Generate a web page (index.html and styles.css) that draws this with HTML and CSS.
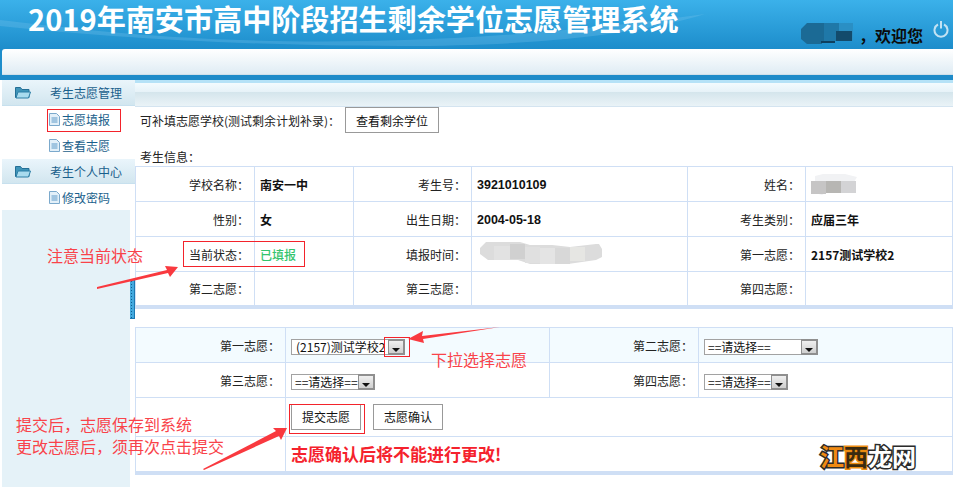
FILE: index.html
```html
<!DOCTYPE html>
<html lang="zh-CN">
<head>
<meta charset="utf-8">
<title>2019年南安市高中阶段招生剩余学位志愿管理系统</title>
<link rel="stylesheet" href="styles.css">
</head>
<body>
<header class="top">
  <svg class="swoosh" viewBox="0 0 953 49" preserveAspectRatio="none" aria-hidden="true"><path d="M0 20C90 30 330 66 705 14C640 34 540 46 400 46C240 46 90 36 0 26Z" fill="#7cc5ec" opacity=".28"/></svg>
  <h1 class="title">2019年南安市高中阶段招生剩余学位志愿管理系统</h1>
  <div class="user">
    <svg class="blur-name" width="54" height="24" viewBox="0 0 54 24" aria-hidden="true"><path d="M8 2h45v18h-30v3H8l-6-5V8z" fill="#1b6a95"/><rect x="25" y="2" width="15" height="18" fill="#1f78a8"/><rect x="40" y="2" width="14" height="18" fill="#2a8fc4"/><rect x="37" y="10" width="16" height="10" fill="#134b6c"/><rect x="22" y="20" width="14" height="2" fill="#0e3f5e"/></svg>
    <span class="welcome">，欢迎您</span>
    <svg class="power" width="16" height="18" viewBox="0 0 16 18" aria-hidden="true"><path d="M5 4.500a6.500 6.500 0 1 0 6 0" fill="none" stroke="#c2e2f3" stroke-width="2"/><path d="M8 1v7.500" stroke="#c2e2f3" stroke-width="2"/></svg>
  </div>
</header>
<nav class="navbar"><div class="navbar-inner"></div></nav>
<div class="bluebar"></div>
<div class="main">
  <aside class="side">
    <div class="group">
      <svg class="folder" width="16" height="13" viewBox="0 0 16 13" aria-hidden="true"><path d="M.5 11.500V1.500h5l1.500 2h7v8z" fill="#3f94b8" stroke="#256f96"/><path d="M1 12l2-6h12.500l-2 6z" fill="#a9dbee" stroke="#2d7fa6"/></svg>
      <span>考生志愿管理</span>
    </div>
    <ul class="links">
      <li><svg class="doc" width="11" height="13" viewBox="0 0 11 13" aria-hidden="true"><path d="M.5.500h7l3 3v9H.5z" fill="#e3f0f9" stroke="#7ba9cc"/><path d="M2.500 5h6M2.500 7h6M2.500 9h6" stroke="#5f9ac8"/></svg>志愿填报</li>
      <li><svg class="doc" width="11" height="13" viewBox="0 0 11 13" aria-hidden="true"><path d="M.5.500h7l3 3v9H.5z" fill="#e3f0f9" stroke="#7ba9cc"/><path d="M2.500 5h6M2.500 7h6M2.500 9h6" stroke="#5f9ac8"/></svg>查看志愿</li>
    </ul>
    <div class="group group-2">
      <svg class="folder" width="16" height="13" viewBox="0 0 16 13" aria-hidden="true"><path d="M.5 11.500V1.500h5l1.500 2h7v8z" fill="#3f94b8" stroke="#256f96"/><path d="M1 12l2-6h12.500l-2 6z" fill="#a9dbee" stroke="#2d7fa6"/></svg>
      <span>考生个人中心</span>
    </div>
    <ul class="links links-2">
      <li><svg class="doc" width="11" height="13" viewBox="0 0 11 13" aria-hidden="true"><path d="M.5.500h7l3 3v9H.5z" fill="#e3f0f9" stroke="#7ba9cc"/><path d="M2.500 5h6M2.500 7h6M2.500 9h6" stroke="#5f9ac8"/></svg>修改密码</li>
    </ul>
    <div class="side-fill"><div class="handle"></div></div>
  </aside>
  <main class="content">
    <div class="content-head"></div>
    <div class="avail">
      <span>可补填志愿学校(测试剩余计划补录)：</span>
      <button class="btn btn-view" type="button">查看剩余学位</button>
    </div>
    <div class="info-title">考生信息：</div>
    <table class="info">
      <colgroup><col class="c1"><col class="c2"><col class="c3"><col class="c4"><col class="c5"><col></colgroup>
      <tr><th>学校名称：</th><td>南安一中</td><th>考生号：</th><td class="mono">3921010109</td><th>姓名：</th><td class="blur-cell"><svg class="blur-short" width="46" height="24" viewBox="0 0 46 24" aria-hidden="true"><path d="M4 10V4l8-2h22l12 3-3 5v11H14l-3 2-7-2z" fill="#f1f2f4"/><rect x="0" y="9" width="15" height="13" fill="#c6c5c5"/><rect x="15" y="9" width="15" height="12" fill="#b7b6b3"/><rect x="30" y="9" width="15" height="12" fill="#d3d3d5"/></svg></td></tr>
      <tr><th>性别：</th><td>女</td><th>出生日期：</th><td class="mono">2004-05-18</td><th>考生类别：</th><td>应届三年</td></tr>
      <tr><th>当前状态：</th><td class="ok">已填报</td><th>填报时间：</th><td class="blur-cell"><svg class="blur-long" width="122" height="28" viewBox="0 0 122 28" aria-hidden="true"><path d="M6 2h34l10 3h22l18 2 26-3h3l3 5v8l-6 3-28 4H50l-12-4H8l-8-6V8z" fill="#dcdcdc"/><rect x="14" y="6" width="16" height="14" fill="#e2e2e2"/><rect x="30" y="4" width="15" height="15" fill="#d0d0d0"/><rect x="45" y="7" width="15" height="16" fill="#e0e0e0"/><rect x="60" y="8" width="15" height="16" fill="#e4e4e4"/><rect x="75" y="8" width="15" height="16" fill="#d8d8d8"/><rect x="90" y="7" width="15" height="14" fill="#e6e6e3"/></svg></td><th>第一志愿：</th><td>2157测试学校2</td></tr>
      <tr><th>第二志愿：</th><td></td><th>第三志愿：</th><td></td><th>第四志愿：</th><td></td></tr>
    </table>
    <table class="choice">
      <colgroup><col class="d1"><col class="d2"><col class="d3"><col></colgroup>
      <tr class="tint">
        <th>第一志愿：</th>
        <td><div class="sel sel-thin"><span class="sel-text">(2157)测试学校2</span><span class="arrow"></span></div></td>
        <th>第二志愿：</th>
        <td><div class="sel sel-wide"><span class="sel-text">==请选择==</span><span class="arrow"></span></div></td>
      </tr>
      <tr>
        <th>第三志愿：</th>
        <td><div class="sel"><span class="sel-text">==请选择==</span><span class="arrow"></span></div></td>
        <th>第四志愿：</th>
        <td><div class="sel"><span class="sel-text">==请选择==</span><span class="arrow"></span></div></td>
      </tr>
      <tr class="actions">
        <th></th>
        <td colspan="3"><button class="btn btn-submit" type="button">提交志愿</button><button class="btn btn-confirm" type="button">志愿确认</button></td>
      </tr>
      <tr class="warning">
        <th></th>
        <td colspan="3">志愿确认后将不能进行更改!</td>
      </tr>
    </table>
  </main>
</div>

<div class="mark mark-link"></div>
<div class="mark mark-state"></div>
<div class="mark mark-arrow"></div>
<div class="mark mark-submit"></div>
<svg class="arrows" width="953" height="487" viewBox="0 0 953 487" aria-hidden="true">
  <path d="M97 287L167 270L165 266L178 267L170 277L168 273L97 289Z" fill="#f9393f"/>
  <path d="M500 327L422 336L423 331L408 339L424 343L423 339Z" fill="#f9393f"/>
  <path d="M203 469L276 431L273 428L287 428L281 440L279 436L204 470Z" fill="#f9393f"/>
</svg>
<div class="note note-state">注意当前状态</div>
<div class="note note-drop">下拉选择志愿</div>
<div class="note note-submit">提交后，志愿保存到系统<br>更改志愿后，须再次点击提交</div>
<div class="watermark"><span class="wm-o">江</span><span class="wm-box">西</span><span class="wm-w">龙网</span></div>
</body>
</html>
```
FILE: styles.css
```css
* { box-sizing: border-box; }
html, body { margin: 0; padding: 0; }
body {
  position: relative;
  width: 953px;
  height: 487px;
  overflow: hidden;
  background: #fff;
  font-family: "Noto Sans CJK SC", "Liberation Sans", sans-serif;
  font-size: 12px;
  color: #222;
}
.top {
  position: relative;
  height: 49px;
  display: flex;
  justify-content: space-between;
  background: linear-gradient(#3bb1ea, #1d8dcb);
}
.swoosh { position: absolute; inset: 0; width: 100%; height: 100%; }
.title {
  position: relative;
  margin: 0;
  padding-left: 28px;
  font-size: 29.100px;
  line-height: 36px;
  font-weight: 700;
  color: #fff;
  white-space: nowrap;
}
.user { position: relative; display: flex; align-items: flex-start; padding-right: 4px; }
.blur-name { margin-top: 21px; margin-right: 6px; }
.welcome { margin-top: 24px; margin-right: 10px; font-size: 16px; line-height: 22px; font-weight: 700; color: #0c0c0c; white-space: nowrap; }
.power { margin-top: 20px; }
.navbar { height: 26px; padding-left: 2px; background: #1d8dcb; }
.navbar-inner {
  height: 100%;
  background: linear-gradient(#fff, #dfecf4);
  border-bottom: 1px solid #cfe0ea;
  border-top-left-radius: 3px;
}
.bluebar { height: 5px; background: #1e8bc9; }
.main { display: flex; height: 407px; }
.side { width: 135px; flex: none; padding-left: 2px; background: #fff; display: flex; flex-direction: column; }
.group {
  height: 26px;
  flex: none;
  display: flex;
  align-items: center;
  padding-left: 13px;
  background: linear-gradient(#eaf5fb, #d2e6ef);
  border-bottom: 1px solid #c7e0ee;
  color: #1a5f8c;
}
.group span { margin-left: 19px; }
.group-2 { height: 25px; }
.folder { flex: none; }
.links { margin: 0; padding: 0; list-style: none; height: 53px; flex: none; }
.links-2 { height: 26px; }
.links li {
  height: 26px;
  padding-left: 47px;
  display: flex;
  align-items: center;
  color: #1a5f8c;
}
.doc { margin-right: 2px; flex: none; }
.side-fill { position: relative; flex: 1; width: 128px; background: #e5f2f8; }
.handle {
  position: absolute;
  left: 128px;
  top: 70px;
  width: 5px;
  height: 39px;
  background-color: #43a9de;
  background-image: radial-gradient(#0e5f93 0.600px, transparent 0.800px);
  background-size: 3px 3px;
  border-right: 1px solid #1b78b2;
  border-bottom: 1px solid #1b78b2;
}
.content { flex: 1; min-width: 0; font-family: "Noto Sans CJK TC", "Noto Sans CJK SC", sans-serif; }
.content-head {
  height: 27px;
  background: linear-gradient(#b5e2f7 0 3px, #f3fbfe 3px, #e6f2f8 12px, #d4e5ec 12px, #eaf3f7 26px, #d4e4f0 26px);
}
.avail { height: 26px; padding-left: 5px; display: flex; align-items: center; white-space: nowrap; }
.avail span { width: 205px; }
.btn {
  font: inherit;
  color: #111;
  background: #fff;
  border: 1px solid #999;
  border-radius: 0;
  padding: 0;
  cursor: pointer;
}
.btn-view { width: 94px; height: 26px; }
.info-title { height: 33px; padding: 15px 0 0 5px; line-height: 18px; }
table { border-collapse: collapse; table-layout: fixed; width: 818px; }
th, td { border: 1px solid #cfdff5; padding: 2px 0 0; line-height: 18px; }
th { font-weight: 400; text-align: right; padding-right: 5px; color: #222; }
.info tr { height: 35px; }
.info td { padding-left: 5px; font-weight: 700; color: #111; font-family: "Noto Sans CJK SC", sans-serif; }
.info { border-bottom: 4px solid #cfdff5; }
.c1 { width: 119px; } .c2 { width: 99px; } .c3 { width: 118px; } .c4 { width: 216px; } .c5 { width: 118px; }
.info .mono { font-family: "Liberation Sans", sans-serif; font-size: 12.500px; }
.info .ok { color: #35c46e; font-weight: 500; }
.info .blur-cell { padding-top: 0; overflow: visible; }
.blur-short { display: block; }
.blur-long { display: block; margin-left: 3px; }
.choice { margin-top: 18px; border-bottom: 4px solid #cfdff5; }
.choice tr { height: 35px; }
.d1 { width: 150px; } .d2 { width: 264px; } .d3 { width: 149px; }
.choice td { padding-left: 5px; }
.tint th, .tint td { background: #f3fbff; }
.choice .actions { height: 39px; }
.choice .actions td { padding-top: 0; }
.choice .warning { height: 37px; }
.warning td { padding-top: 0; font-size: 17px; font-weight: 700; color: #f5222d; font-family: "Noto Sans CJK SC", sans-serif; }
.sel {
  display: inline-flex;
  width: 84px;
  height: 16px;
  align-items: stretch;
  vertical-align: middle;
  border: 1px solid #a2a2a2;
  background: #fff;
  color: #111;
  font-family: "Noto Sans CJK SC", sans-serif;
}
.sel-text { flex: 1; min-width: 0; line-height: 14px; padding-left: 3px; white-space: nowrap; }
.sel-thin { width: 114px; }
.sel-thin .sel-text { padding-left: 4px; }
.sel-wide { width: 114px; }
.arrow {
  position: relative;
  flex: none;
  width: 17px;
  margin: -1px -1px -1px 0;
  background: linear-gradient(#efefef, #cfcfcf);
  border: 2px solid #8f8f8f;
  border-left-width: 1px;
}
.arrow::after {
  content: "";
  position: absolute;
  left: 3px;
  bottom: 1px;
  border: 4px solid transparent;
  border-top: 4px solid #111;
  border-bottom: 0;
}
.btn-submit { width: 70px; height: 26px; }
.btn-confirm { width: 70px; height: 26px; margin-left: 12px; }
.mark { position: absolute; border: 1px solid #f3232b; pointer-events: none; }
.mark-link { left: 47px; top: 109px; width: 74px; height: 23px; }
.mark-state { left: 183px; top: 241px; width: 122px; height: 26px; }
.mark-arrow { left: 384px; top: 337px; width: 26px; height: 20px; }
.mark-submit { left: 289px; top: 404px; width: 76px; height: 30px; }
.arrows { position: absolute; left: 0; top: 0; pointer-events: none; }
.note { position: absolute; font-size: 16px; line-height: 22px; color: #f9434a; white-space: nowrap; }
.note-state { left: 47px; top: 244px; }
.note-drop { left: 431px; top: 348px; }
.note-submit { left: 16px; top: 413px; }
.watermark {
  position: absolute;
  left: 820px;
  top: 442px;
  font-size: 24px;
  line-height: 28px;
  font-weight: 700;
  white-space: nowrap;
}
.watermark span {
  -webkit-text-stroke: 3px #2b2b2b;
  paint-order: stroke fill;
}
.wm-o { color: #f08a12; }
.watermark .wm-box { color: #3a2a10; -webkit-text-stroke: 3px #ec8c10; }
.wm-w { color: #fff; }
```
